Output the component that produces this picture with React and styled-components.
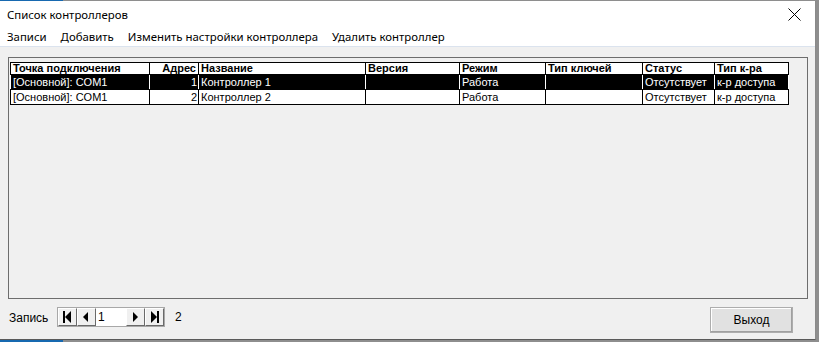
import React from "react";
import styled, { createGlobalStyle } from "styled-components";

const Global = createGlobalStyle`
  html, body { margin: 0; padding: 0; }
  body {
    width: 819px; height: 342px; overflow: hidden;
    background: #1769b0;
    font-family: "Liberation Sans", Arial, sans-serif;
  }
`;

const Desktop = styled.div`
  width: 819px;
  height: 342px;
  display: flex;
  flex-direction: column;
  background: linear-gradient(to right, #1769b0 0 63px, #8e8e8e 63px);
`;

const Window = styled.div`
  margin-top: 1px;
  width: 815px;
  height: 338px;
  display: flex;
  flex-direction: column;
  background: #ffffff;
  border-right: 1px solid #8a8a8a;
  border-bottom: 1px solid #5a5a5a;
`;

const TitleBar = styled.div`
  height: 26px;
  display: flex;
  align-items: center;
  justify-content: space-between;
  padding-left: 7px;
  font-family: "Segoe UI", "Noto Sans", sans-serif;
  font-size: 11.4px;
  color: #000;
`;

const CloseBox = styled.div`
  width: 46px;
  height: 26px;
  display: flex;
  align-items: center;
  justify-content: center;
  margin-right: -2px;
`;

const MenuBar = styled.div`
  height: 20px;
  display: flex;
  align-items: center;
  border-bottom: 1px solid #dbe3ee;
  font-family: "Segoe UI", "Noto Sans", sans-serif;
  font-size: 11.4px;
`;

const MenuItem = styled.span`
  padding: 0 7px;
  color: #000;
`;

const Body = styled.div`
  flex: 1;
  background: #f0f0f0;
  display: flex;
  flex-direction: column;
  padding: 10px 7px 0 8px;
`;

const GridFrame = styled.div`
  height: 242px;
  border: 1px solid #6d6d6d;
  background: #f0f0f0;
  padding: 4px 0 0 1px;
  box-sizing: border-box;
`;

const Table = styled.table`
  border-collapse: collapse;
  table-layout: fixed;
  font-family: "Liberation Sans", Arial, sans-serif;
  font-size: 11px;
`;

const Th = styled.th`
  border: 1px solid #000;
  background: #fff;
  height: 11px;
  padding: 0 2px;
  font-weight: bold;
  text-align: ${(p) => (p.$right ? "right" : "left")};
  line-height: 11px;
  white-space: nowrap;
  overflow: hidden;
`;

const Tr = styled.tr`
  background: ${(p) => (p.$sel ? "#000" : "#fff")};
  color: ${(p) => (p.$sel ? "#fff" : "#000")};
`;

const Td = styled.td`
  border: 1px solid ${(p) => (p.$sel ? "#fff" : "#000")};
  border-top-color: #000;
  border-bottom-color: #000;
  height: 14px;
  padding: 0 1px 0 2px;
  text-align: ${(p) => (p.$right ? "right" : "left")};
  line-height: 14px;
  white-space: nowrap;
  overflow: hidden;
`;

const Footer = styled.div`
  height: 40px;
  display: flex;
  align-items: center;
  font-family: "Liberation Sans", Arial, sans-serif;
  font-size: 12px;
`;

const Label = styled.span`
  margin-left: 1px;
  width: 48px;
  margin-top: -3px;
`;

const Nav = styled.div`
  display: flex;
  height: 20px;
  border: 1px solid #a8a8a8;
  background: #e8e8e8;
  box-sizing: border-box;
  margin-top: -4px;
`;

const NavBtn = styled.div`
  width: 19px;
  height: 18px;
  box-sizing: border-box;
  border-top: 1px solid #fff;
  border-left: 1px solid #fff;
  border-right: 1px solid #6a6a6a;
  border-bottom: 1px solid #6a6a6a;
  background: #f0f0f0;
  display: flex;
  align-items: center;
  justify-content: center;
`;

const NavField = styled.div`
  width: 30px;
  height: 18px;
  background: #fff;
  font-size: 12px;
  line-height: 18px;
  padding-left: 2px;
  box-sizing: border-box;
`;

const Count = styled.span`
  margin-left: 10px;
  margin-top: -4px;
`;

const Spacer = styled.div`
  flex: 1;
`;

const ExitButton = styled.button`
  width: 83px;
  height: 26px;
  margin-right: 15px;
  margin-top: 1px;
  background: #e1e1e1;
  border: 1px solid #adadad;
  box-shadow: inset -1px -1px 0 #a0a0a0, inset 1px 1px 0 #fff;
  font-family: "Liberation Sans", Arial, sans-serif;
  font-size: 12px;
  color: #000;
  padding: 0;
`;

const Glyph = ({ type }) => {
  const paths = {
    first: (
      <>
        <rect x="1" y="0" width="2" height="12" />
        <path d="M9 0 L3 6 L9 12 Z" />
      </>
    ),
    prev: <path d="M7 1 L2 6 L7 11 Z" />,
    next: <path d="M3 1 L8 6 L3 11 Z" />,
    last: (
      <>
        <path d="M2 0 L8 6 L2 12 Z" />
        <rect x="8" y="0" width="2" height="12" />
      </>
    ),
  };
  return (
    <svg width="11" height="12" viewBox="0 0 11 12" fill="#000">
      {paths[type]}
    </svg>
  );
};

const columns = [
  { title: "Точка подключения", w: 139 },
  { title: "Адрес", w: 49, right: true },
  { title: "Название", w: 167 },
  { title: "Версия", w: 94 },
  { title: "Режим", w: 86 },
  { title: "Тип ключей", w: 97 },
  { title: "Статус", w: 72 },
  { title: "Тип к-ра", w: 74 },
];

const rows = [
  ["[Основной]: COM1", "1", "Контроллер 1", "", "Работа", "", "Отсутствует", "к-р доступа"],
  ["[Основной]: COM1", "2", "Контроллер 2", "", "Работа", "", "Отсутствует", "к-р доступа"],
];

export default function App() {
  return (
    <>
      <Global />
      <Desktop>
        <Window>
          <TitleBar>
            <span>Список контроллеров</span>
            <CloseBox>
              <svg width="13" height="13" viewBox="0 0 13 13">
                <path d="M0.5 0.5 L12.5 12.5 M12.5 0.5 L0.5 12.5" stroke="#000" strokeWidth="1" />
              </svg>
            </CloseBox>
          </TitleBar>
          <MenuBar>
            <MenuItem>Записи</MenuItem>
            <MenuItem>Добавить</MenuItem>
            <MenuItem>Изменить настройки контроллера</MenuItem>
            <MenuItem>Удалить контроллер</MenuItem>
          </MenuBar>
          <Body>
            <GridFrame>
              <Table>
                <colgroup>
                  {columns.map((c) => (
                    <col key={c.title} style={{ width: c.w }} />
                  ))}
                </colgroup>
                <thead>
                  <tr>
                    {columns.map((c) => (
                      <Th key={c.title} $right={c.right}>
                        {c.title}
                      </Th>
                    ))}
                  </tr>
                </thead>
                <tbody>
                  {rows.map((r, i) => (
                    <Tr key={i} $sel={i === 0}>
                      {r.map((v, j) => (
                        <Td key={j} $sel={i === 0} $right={columns[j].right}>
                          {v}
                        </Td>
                      ))}
                    </Tr>
                  ))}
                </tbody>
              </Table>
            </GridFrame>
            <Footer>
              <Label>Запись</Label>
              <Nav>
                <NavBtn><Glyph type="first" /></NavBtn>
                <NavBtn><Glyph type="prev" /></NavBtn>
                <NavField>1</NavField>
                <NavBtn><Glyph type="next" /></NavBtn>
                <NavBtn><Glyph type="last" /></NavBtn>
              </Nav>
              <Count>2</Count>
              <Spacer />
              <ExitButton>Выход</ExitButton>
            </Footer>
          </Body>
        </Window>
      </Desktop>
    </>
  );
}
